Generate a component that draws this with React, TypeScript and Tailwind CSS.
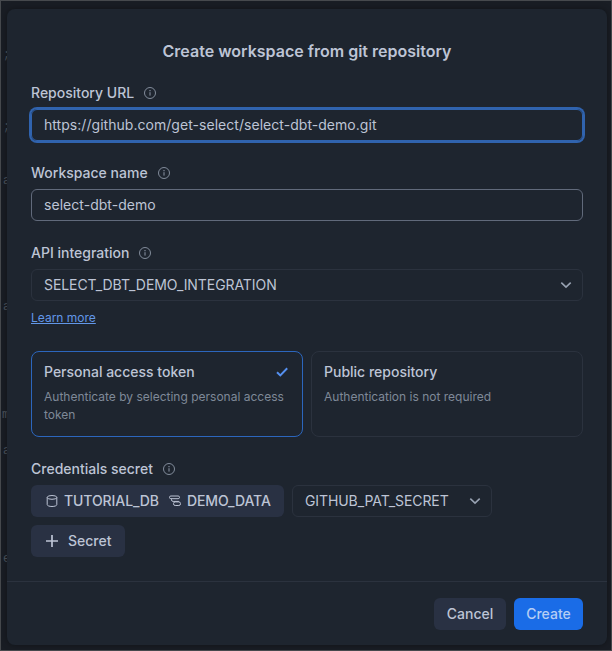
import type { ReactNode } from "react";

const InfoIcon = () => (
  <svg className="h-3 w-3 text-[#8d97a7]" viewBox="0 0 12 12" fill="none" stroke="currentColor">
    <circle cx="6" cy="6" r="5.5" strokeWidth="0.9" />
    <path d="M6 5.2v3.4" strokeWidth="1" />
    <path d="M6 3.1v1.1" strokeWidth="1.1" />
  </svg>
);

const ChevronIcon = () => (
  <svg className="h-3 w-3 shrink-0 text-[#98a2b2]" viewBox="0 0 12 12" fill="none" stroke="currentColor" strokeWidth="1.6">
    <path d="M1.3 3.7 6 8.2l4.7-4.5" />
  </svg>
);

const Label = ({ children }: { children: ReactNode }) => (
  <div className="flex h-4 items-center gap-2.5 text-sm font-medium">
    <span>{children}</span>
    <InfoIcon />
  </div>
);

const BackgroundCode = () => (
  <div className="absolute top-0 left-px h-full w-3 font-['Liberation_Mono',monospace] text-xs leading-4 text-[#4c535c]">
    <span className="absolute top-[46px] left-px">;</span>
    <span className="absolute top-[118px] left-px">;</span>
    <span className="absolute top-[172px] left-px">a</span>
    <span className="absolute top-[298px] left-px">a</span>
    <span className="absolute top-[406px] left-0">m</span>
    <span className="absolute top-[442px] left-px">a</span>
    <span className="absolute top-[550px] left-px">e</span>
  </div>
);

export default function App() {
  return (
    <div className="relative h-[651px] w-[612px] border border-[#46494d] bg-[#191d24] pt-2 pl-1.5 font-[Inter,sans-serif] text-sm text-[#bdc4d5]">
      <BackgroundCode />
      <div className="relative flex h-[636px] w-[600px] flex-col rounded-lg bg-[#1e252f] shadow-[0_0_6px_rgba(0,0,0,0.35)]">
        <h1 className="mt-8 h-5 text-center text-base leading-5 font-semibold">
          Create workspace from git repository
        </h1>

        <div className="mt-6 px-6">
          <Label>Repository URL</Label>
          <div className="mt-2 flex h-8 items-center rounded-md border border-[#3063ae] px-3 tracking-[0.04px] ring-2 ring-[#3063ae]">
            https://github.com/get-select/select-dbt-demo.git
          </div>
        </div>

        <div className="mt-6 px-6">
          <Label>Workspace name</Label>
          <div className="mt-2 flex h-8 items-center rounded-md border border-[#616a7b] px-3 tracking-[0.04px]">
            select-dbt-demo
          </div>
        </div>

        <div className="mt-6 px-6">
          <Label>API integration</Label>
          <div className="mt-2 flex h-8 items-center justify-between rounded-md border border-[#2b323e] pr-2.5 pl-3 tracking-[-0.07px]">
            SELECT_DBT_DEMO_INTEGRATION
            <ChevronIcon />
          </div>
          <a className="mt-2 block h-[18px] text-xs leading-[18px] text-[#6297e8] underline">Learn more</a>
        </div>

        <div className="mt-6 flex gap-2 px-6">
          <div className="h-[86px] w-[272px] rounded-lg border border-[#2c66bd] px-3 pt-2.5">
            <div className="flex h-5 items-center justify-between font-medium">
              Personal access token
              <svg className="mr-0.5 h-3 w-3 text-[#5590f0]" viewBox="0 0 12 12" fill="none" stroke="currentColor" strokeWidth="2">
                <path d="m1 6.3 3.3 3.1L11.2 2.3" />
              </svg>
            </div>
            <p className="mt-[6px] text-xs leading-[18px] text-[#7f8998]">
              Authenticate by selecting personal access token
            </p>
          </div>
          <div className="h-[86px] w-[272px] rounded-lg border border-[#2b323e] px-3 pt-2.5">
            <div className="flex h-5 items-center font-medium">Public repository</div>
            <p className="mt-[6px] text-xs leading-[18px] text-[#7f8998]">Authentication is not required</p>
          </div>
        </div>

        <div className="mt-6 px-6">
          <Label>Credentials secret</Label>
          <div className="mt-2 flex gap-2">
            <div className="flex h-8 w-[253px] items-center rounded-md bg-[#293143] pl-[15px] font-medium tracking-[-0.09px]">
              <svg className="h-3 w-3" viewBox="0 0 12 12" fill="none" stroke="currentColor">
                <ellipse cx="6" cy="2.4" rx="4.8" ry="1.9" />
                <path d="M1.2 2.4v7.2c0 1.1 2.1 1.9 4.8 1.9s4.8-.8 4.8-1.9V2.4" />
              </svg>
              <span className="ml-1.5">TUTORIAL_DB</span>
              <svg className="ml-2.5 h-3 w-3" viewBox="0 0 12 12" fill="none" stroke="currentColor">
                <rect x="0.5" y="1" width="10" height="2.7" rx="1.35" />
                <path d="M2.5 3.7v1.1q0 1.6 1.6 1.6h5.8" />
                <rect x="4.5" y="6.9" width="7" height="3.6" rx="1.7" />
              </svg>
              <span className="ml-1.5">DEMO_DATA</span>
            </div>
            <div className="flex h-8 w-[200px] items-center justify-between rounded-md border border-[#2b323e] pr-2.5 pl-3 tracking-[-0.09px]">
              GITHUB_PAT_SECRET
              <ChevronIcon />
            </div>
          </div>
          <button className="mt-2 flex h-8 w-[94px] items-center gap-2.5 rounded-md bg-[#293143] pl-[15px] font-medium">
            <svg className="h-3 w-3" viewBox="0 0 12 12" stroke="currentColor" strokeWidth="1.7">
              <path d="M6 0v12M0 6h12" />
            </svg>
            Secret
          </button>
        </div>

        <div className="mt-auto flex h-16 items-center justify-end gap-2 border-t border-[#2b323e] px-6">
          <button className="h-8 w-[72px] rounded-md bg-[#293143] font-medium">Cancel</button>
          <button className="h-8 w-[69px] rounded-md bg-[#1a6ce7] font-medium text-[#b5cdf4]">Create</button>
        </div>
      </div>
    </div>
  );
}
